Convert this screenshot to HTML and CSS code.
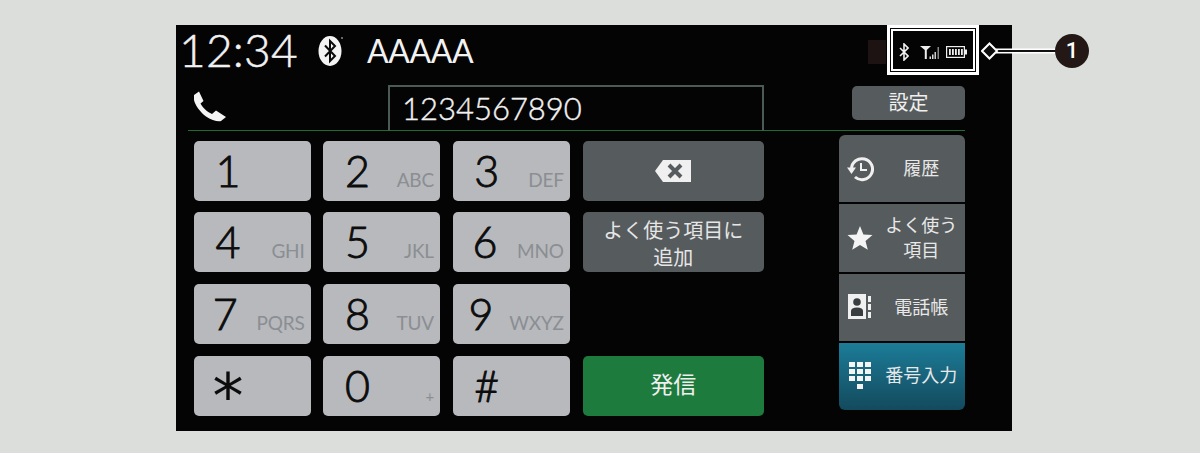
FILE: index.html
```html
<!DOCTYPE html>
<html lang="ja">
<head>
<meta charset="utf-8">
<title>電話</title>
<link rel="stylesheet" href="styles.css">
</head>
<body>
<div class="stage">
  <main class="screen">
    <header class="status">
      <span class="clock">12:34</span>
      <svg class="bt-badge" width="26" height="32" viewBox="0 0 26 32">
        <ellipse cx="12" cy="16" rx="11.500" ry="15" fill="#f4f4f4"/>
        <path d="M7 10.500 17 21 12 26V6l5 5L7 21.500" fill="none" stroke="#0a0a0a" stroke-width="2"/>
        <circle cx="24" cy="3" r="1" fill="#888"/>
      </svg>
      <span class="device">AAAAA</span>
      <span class="spacer"></span>
      <span class="dimbox"></span>
      <span class="st-icons">
        <svg class="st-bt" width="10" height="18" viewBox="0 0 10 18"><path d="M1 5l8 8-4 4V1l4 4-8 8" fill="none" stroke="#f2f2f2" stroke-width="1.600"/></svg>
        <svg class="st-sig" width="20" height="15" viewBox="0 0 20 15">
          <path d="M0 1h11L6.800 5V14H4.800V5z" fill="#eee"/>
          <path d="M9.500 11.500h1.500V14H9.500zM12 9.500h1.500V14H12z" fill="#ddd"/>
          <path d="M14.500 7h1.500v7h-1.500z" fill="#ccc"/>
          <path d="M17.500 2h1.500v12h-1.500z" fill="#888"/>
        </svg>
        <svg width="21" height="12" viewBox="0 0 21 12">
          <rect x=".6" y=".6" width="17.800" height="10.800" fill="none" stroke="#eee" stroke-width="1.200"/>
          <path d="M3 3h1.800v6H3zM6 3h1.800v6H6zM9 3h1.800v6H9zM12 3h1.800v6H12zM15 3h1.800v6H15zM19 3.500h2v5h-2z" fill="#eee"/>
        </svg>
      </span>
    </header>

    <section class="dial-row">
      <svg class="phone" width="33" height="31" viewBox="0 0 33 31">
        <path d="M0 4 5 .5 9.500 10 6.500 12.500C8 16 13 21 18 23L22 19.500 32 26 27 30C24 31 17 29 12 25.500 6 21 1 14 0 9Z" fill="#f4f4f4"/>
      </svg>
      <div class="number">1234567890</div>
      <button class="settings">設定</button>
    </section>

    <section class="main">
      <div class="keypad">
        <div class="key"><span class="digit">1</span></div>
        <div class="key"><span class="digit">2</span><span class="sub">ABC</span></div>
        <div class="key"><span class="digit">3</span><span class="sub">DEF</span></div>
        <div class="action">
          <svg width="36" height="24" viewBox="0 0 36 24">
            <path d="M8 1h28v22H8L0 12z" fill="#f0f0f0"/>
            <path d="M14 6l12 12M26 6 14 18" stroke="#565b5d" stroke-width="4"/>
          </svg>
        </div>
        <div class="key"><span class="digit">4</span><span class="sub">GHI</span></div>
        <div class="key"><span class="digit">5</span><span class="sub">JKL</span></div>
        <div class="key"><span class="digit">6</span><span class="sub">MNO</span></div>
        <div class="action action-text">よく使う項目に<br>追加</div>
        <div class="key"><span class="digit">7</span><span class="sub">PQRS</span></div>
        <div class="key"><span class="digit">8</span><span class="sub">TUV</span></div>
        <div class="key"><span class="digit">9</span><span class="sub">WXYZ</span></div>
        <div class="empty"></div>
        <div class="key"><span class="digit digit-star">*</span></div>
        <div class="key"><span class="digit">0</span><span class="sub sub-plus">+</span></div>
        <div class="key"><span class="digit">#</span></div>
        <div class="action call">発信</div>
      </div>

      <nav class="tabs">
        <div class="tab">
          <svg class="tab-icon" width="28" height="28" viewBox="0 0 28 28">
            <path d="M5.500 14A10.500 10.500 0 1 1 9 22" fill="none" stroke="#f0f0f0" stroke-width="3"/>
            <path d="M1 12.500h9L5.500 19z" fill="#f0f0f0"/>
            <path d="M15 8v7h6" fill="none" stroke="#f0f0f0" stroke-width="2"/>
          </svg>
          <span class="tab-label">履歴</span>
        </div>
        <div class="tab">
          <svg class="tab-icon" width="28" height="28" viewBox="0 0 28 28">
            <path d="M14 2l3.400 8.500 9.100.6-7 5.800 2.300 8.800L14 20.900 6.200 25.700l2.300-8.800-7-5.800 9.100-.6z" fill="#f4f4f4"/>
          </svg>
          <span class="tab-label">よく使う<br>項目</span>
        </div>
        <div class="tab">
          <svg class="tab-icon" width="28" height="28" viewBox="0 0 28 28">
            <path d="M2 1h18v25H2z" fill="#f0f0f0"/>
            <path d="M22 3h3v6h-3zM22 11h3v6h-3zM22 19h3v6h-3z" fill="#f0f0f0"/>
            <circle cx="11" cy="9" r="3.800" fill="#3a3d3f"/>
            <path d="M5 23v-5c0-2 2-3.500 6-3.500s6 1.500 6 3.500v5z" fill="#3a3d3f"/>
          </svg>
          <span class="tab-label">電話帳</span>
        </div>
        <div class="tab tab-on">
          <svg class="tab-icon" width="28" height="30" viewBox="0 0 28 30">
            <path d="M3 1h6v5H3zM11 1h6v5h-6zM19 1h6v5h-6zM3 8h6v5H3zM11 8h6v5h-6zM19 8h6v5h-6zM3 15h6v5H3zM11 15h6v5h-6zM19 15h6v5h-6zM11 23h6v5h-6z" fill="#f4f4f4"/>
          </svg>
          <span class="tab-label">番号入力</span>
        </div>
      </nav>
    </section>
  </main>

  <div class="focus-box"></div>
  <svg class="leader" width="80" height="22" viewBox="0 0 80 22">
    <path d="M15 11h62" stroke="#fff" stroke-width="5"/>
    <path d="M15 11h62" stroke="#111" stroke-width="2"/>
    <path d="M8.500 3.500 16 11l-7.500 7.500L1 11z" fill="#0c0c0c" stroke="#fff" stroke-width="2"/>
  </svg>
  <div class="badge">1</div>
</div>
</body>
</html>
```

FILE: styles.css
```css
* { box-sizing: border-box; }
html, body { margin: 0; height: 100%; }
body {
  background: #dcdedc;
  overflow: hidden;
  font-family: Lato, "Noto Sans CJK JP", sans-serif;
}
.stage {
  position: relative;
  width: 1200px;
  height: 453px;
  padding: 25px 0 0 176px;
}
.screen {
  width: 836px;
  height: 406px;
  background: #040404;
  color: #f2f2f2;
  display: flex;
  flex-direction: column;
}

/* status bar */
.status {
  height: 53px;
  display: flex;
  align-items: center;
  padding: 0 45px 0 3px;
}
.clock {
  font-size: 46px;
  font-weight: 300;
  -webkit-text-stroke: .5px #f2f2f2;
  letter-spacing: .2px;
  width: 139px;
  line-height: 48px;
  margin-top: -4px;
}
.bt-badge { flex: none; margin-top: -1px; }
.device {
  margin-left: 23px;
  font-size: 32px;
  font-weight: 400;
  letter-spacing: -.4px;
  line-height: 48px;
  margin-top: -2px;
}
.spacer { flex: 1; }
.dimbox {
  width: 18px;
  height: 24px;
  background: #1c1312;
  margin-right: 13px;
}
.st-icons {
  display: flex;
  align-items: center;
  gap: 6px;
  margin-top: 1px;
}
.st-sig { margin-left: 5px; }

/* number row */
.dial-row {
  height: 53px;
  margin: 0 47px 0 12px;
  padding: 7px 0 0 6px;
  border-bottom: 1px solid #1f6b35;
  display: flex;
  align-items: flex-start;
}
.phone { flex: none; margin-top: 6px; }
.number {
  margin-left: 161px;
  width: 376px;
  height: 46px;
  border: 2px solid #4b5a55;
  border-bottom-width: 0;
  font-size: 31px;
  font-weight: 300;
  -webkit-text-stroke: .4px #f2f2f2;
  line-height: 43px;
  padding-left: 12px;
}
.settings {
  margin: 1px 0 0 88px;
  width: 113px;
  height: 34px;
  border: 0;
  border-radius: 5px;
  background: #565b5d;
  color: #efefef;
  font: 400 20px/32px "Noto Sans CJK JP", sans-serif;
  padding: 0 0 2px;
}

/* body */
.main {
  display: flex;
  padding: 4px 47px 0 18px;
}
.keypad {
  margin-top: 5.600px;
  display: grid;
  grid-template-columns: 117px 117px 117.500px 181px;
  grid-auto-rows: 60.200px;
  column-gap: 12.400px;
  row-gap: 11.500px;
}
.key {
  background: #b7b9bd;
  border-radius: 5px;
  color: #0c0c0c;
  display: flex;
  align-items: baseline;
  justify-content: space-between;
  padding-right: 6.500px;
  line-height: 60px;
}
.digit {
  width: 68px;
  text-align: center;
  font-size: 43px;
  font-weight: 300;
  -webkit-text-stroke: .9px #0c0c0c;
}
.digit-star {
  align-self: flex-start;
  font: 400 62px/81px "DejaVu Sans", sans-serif;
  -webkit-text-stroke: 0;
}
.sub {
  font-size: 19px;
  color: #8b8e92;
  letter-spacing: -.2px;
}
.sub-plus { font-size: 15px; }
.action {
  background: #565b5d;
  border-radius: 5px;
  display: flex;
  align-items: center;
  justify-content: center;
  text-align: center;
}
.action-text {
  font: 400 20px/27px "Noto Sans CJK JP", sans-serif;
  color: #e6e6e6;
  padding-top: 1px;
}
.call {
  background: #1e7b3e;
  color: #efefef;
  font: 400 23px/1 "Noto Sans CJK JP", sans-serif;
  padding-bottom: 4px;
}

/* right tabs */
.tabs {
  margin-left: 75px;
  width: 126px;
  height: 275px;
  display: grid;
  grid-auto-rows: 1fr;
  gap: 2px;
  border-radius: 6px;
  overflow: hidden;
}
.tab {
  background: #565b5d;
  display: flex;
  align-items: center;
  padding-left: 7px;
  color: #e8e8e8;
  font: 400 18px/25px "Noto Sans CJK JP", sans-serif;
}
.tab-icon { flex: none; }
.tab-label { flex: 1; text-align: center; padding: 0 0 2px 4px; }
.tab-on {
  background: linear-gradient(#1c7c98, #134a5d);
  padding-bottom: 1px;
}

/* callout, drawn over the screen edge */
.focus-box {
  position: absolute;
  left: 887px;
  top: 25px;
  width: 92px;
  height: 50px;
  border: 3px solid #fff;
  box-shadow: inset 0 0 0 1px #040404, inset 0 0 0 3px #fff;
}
.leader {
  position: absolute;
  left: 981px;
  top: 40px;
}
.badge {
  position: absolute;
  left: 1055px;
  top: 34px;
  width: 34px;
  height: 34px;
  border-radius: 50%;
  background: #231815;
  color: #fff;
  font: 500 22px/34px Roboto, sans-serif;
  text-align: center;
}
```
